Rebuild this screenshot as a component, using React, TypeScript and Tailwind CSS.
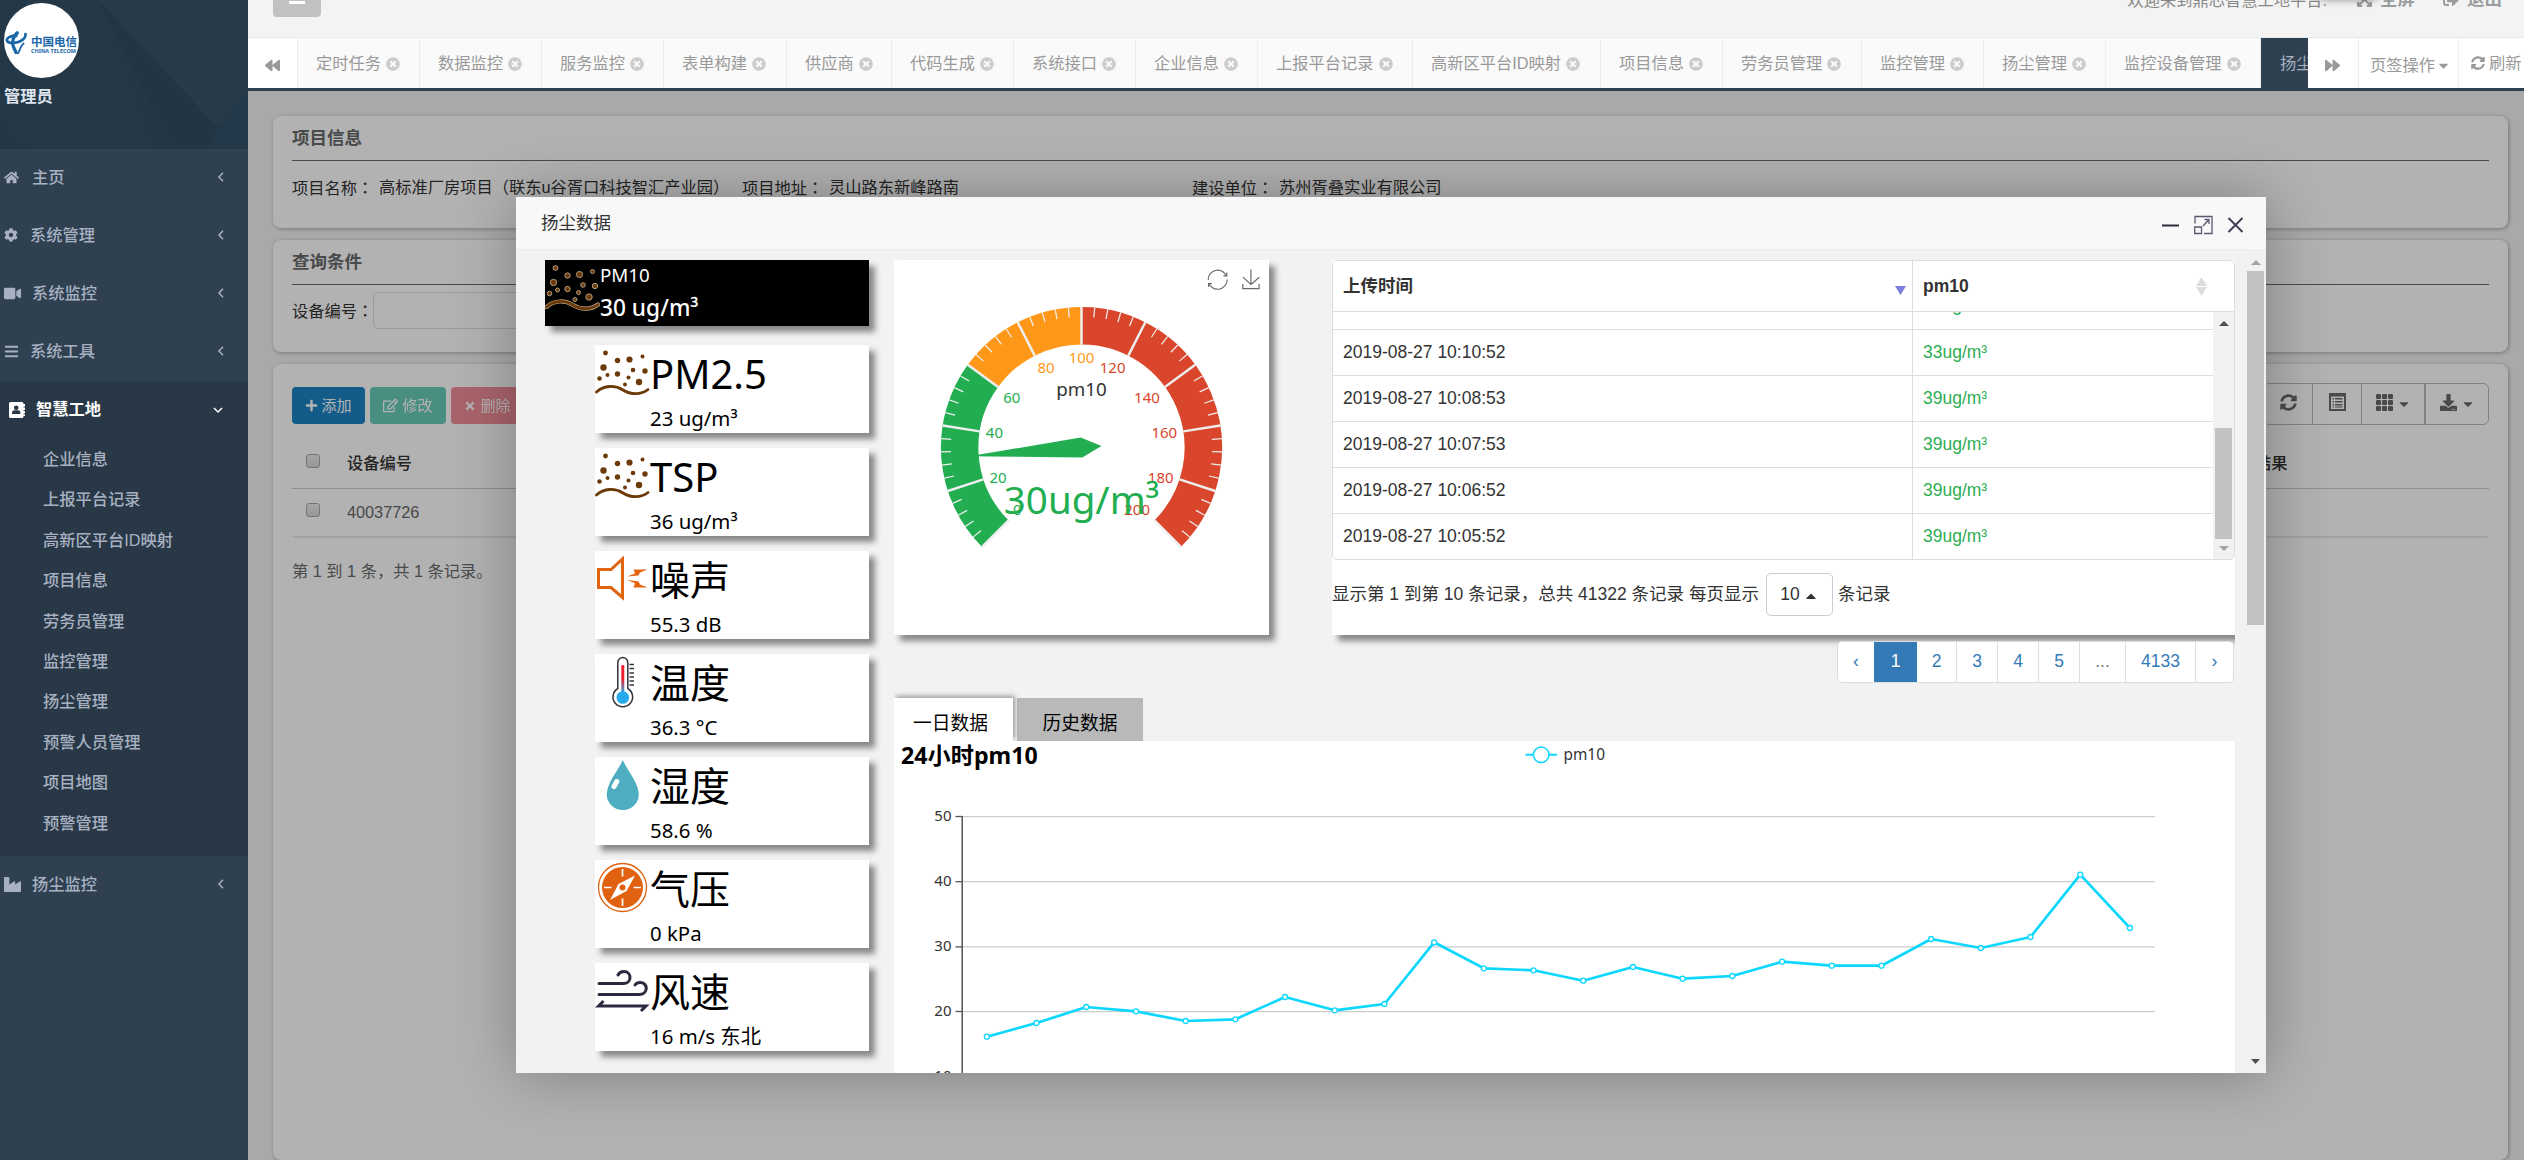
import React from 'react';
import {
  FaHome, FaCog, FaVideo, FaBars, FaIndustry, FaBackward, FaForward, FaTimesCircle, FaCaretDown, FaCaretUp,
  FaSyncAlt, FaPlus, FaTimes, FaRegEdit, FaDownload, FaExpandArrowsAlt, FaSignOutAlt,
} from 'react-icons/fa';

const UI = "font-['Noto_Sans','Noto_Sans_CJK_SC',sans-serif]";
const ARIAL = "font-['Liberation_Sans','Noto_Sans_CJK_SC',sans-serif]";

/* ---------- Sidebar ---------- */

function Chevron({ down = false }: { down?: boolean }) {
  return (
    <svg width="12" height="12" viewBox="0 0 12 12" fill="none" stroke="currentColor" strokeWidth="1.5">
      <path d={down ? 'M2 4L6 8L10 4' : 'M8 1.8L4 6L8 10.2'} />
    </svg>
  );
}

function ContactBook() {
  return (
    <svg width="16" height="16" viewBox="0 0 16 16">
      <path fill="#fff" d="M1.5 0H13a1.5 1.5 0 0 1 1.5 1.5V2H16v2.5h-1.5v1H16V8h-1.500v1H16v2.500h-1.500v1H16V14h-1.500v.5A1.500 1.500 0 0 1 13 16H1.500A1.500 1.500 0 0 1 0 14.500v-13A1.500 1.500 0 0 1 1.500 0Z" />
      <circle cx="7.2" cy="5.800" r="2.300" fill="#293846" />
      <path d="M3 12v-1.500a2.500 2.500 0 0 1 2.500-2.200h3.400a2.500 2.500 0 0 1 2.500 2.200V12Z" fill="#293846" />
    </svg>
  );
}

function TelecomLogo() {
  return (
    <div className="flex size-[75px] items-center overflow-hidden rounded-full bg-white text-[#1a66a8]">
      <svg width="23" height="25" viewBox="0 0 24 26" className="mt-[5px] ml-[1px] shrink-0" fill="none" stroke="currentColor">
        <path d="M21 2C23 7 17 12 8 12.500C2 12.500 0 9 4 6.500C8 4 13 5 13 5" strokeWidth="2.800" />
        <path d="M14 1C8 5 7 12 9 17C10 20 12 22 12 24" strokeWidth="3.400" />
        <path d="M13 24C17 19 15 16 20 12.500" strokeWidth="1.800" />
      </svg>
      <div className={`mt-[8px] ml-[3px] flex flex-col whitespace-nowrap ${UI}`}>
        <span className="text-[11.5px] leading-[13px] font-bold">中国电信</span>
        <span className="text-[5.500px] leading-[7px] font-bold">CHINA TELECOM</span>
      </div>
    </div>
  );
}

const subItems = ['企业信息', '上报平台记录', '高新区平台ID映射', '项目信息', '劳务员管理', '监控管理', '扬尘管理', '预警人员管理', '项目地图', '预警管理'];

function NavItem({ icon, label, gap }: { icon: React.ReactNode; label: string; gap: string }) {
  return (
    <div className="flex h-[58px] items-center pr-[21px] pb-[2px] pl-[4px] text-[#a7b1c2]">
      {icon}
      <span className={`flex-1 ${gap}`}>{label}</span>
      <Chevron />
    </div>
  );
}

function Sidebar() {
  return (
    <aside className={`flex w-[248px] shrink-0 flex-col bg-[#2f4050] text-[16.25px] leading-none font-medium ${ARIAL}`}>
      <div className="relative h-[149px] overflow-hidden bg-[#243747] pt-[3px] pl-[4px]">
        <svg className="absolute inset-0" width="248" height="149">
          <path d="M98 0H248V110L218 128Z" fill="#273a4a" />
          <path d="M98 0L218 128L206 149H175Z" fill="#223544" />
          <path d="M218 128L248 90V149H208Z" fill="#233848" />
          <path d="M100 0L186 22L248 8V0Z" fill="#293b4b" />
          <path d="M0 0H98L150 149H30L0 110Z" fill="#253848" />
        </svg>
        <div className="relative">
          <TelecomLogo />
          <div className="mt-[10px] font-bold text-[#dfe4ed]">管理员</div>
        </div>
      </div>
      <NavItem icon={<FaHome size={15} />} label="主页" gap="ml-[13px]" />
      <NavItem icon={<FaCog size={14} />} label="系统管理" gap="ml-[12px]" />
      <NavItem icon={<FaVideo size={17} />} label="系统监控" gap="ml-[11px]" />
      <NavItem icon={<FaBars size={15} />} label="系统工具" gap="ml-[11px]" />
      <div className="h-[475px] bg-[#293846]">
        <div className="flex h-[58px] items-center pr-[24px] pb-[1px] pl-[9px] text-white">
          <ContactBook />
          <span className="ml-[11px] flex-1 font-bold">智慧工地</span>
          <Chevron down />
        </div>
        {subItems.map((s) => (
          <div key={s} className="flex h-[40.4px] items-center pl-[43px] text-[#a7b1c2]">{s}</div>
        ))}
      </div>
      <NavItem icon={<FaIndustry size={17} />} label="扬尘监控" gap="ml-[11px]" />
    </aside>
  );
}

/* ---------- Top bars ---------- */

const tabs: [string, string][] = [
  ['定时任务', 'w-[122px]'], ['数据监控', 'w-[122px]'], ['服务监控', 'w-[122px]'], ['表单构建', 'w-[123px]'],
  ['供应商', 'w-[105px]'], ['代码生成', 'w-[122px]'], ['系统接口', 'w-[122px]'], ['企业信息', 'w-[122px]'],
  ['上报平台记录', 'w-[155px]'], ['高新区平台ID映射', 'w-[188px]'], ['项目信息', 'w-[122px]'], ['劳务员管理', 'w-[139px]'],
  ['监控管理', 'w-[122px]'], ['扬尘管理', 'w-[122px]'], ['监控设备管理', 'w-[155px]'],
];

function TopBar() {
  return (
    <div className="relative flex h-[38px] items-start justify-between overflow-hidden border-b border-[#e7eaec] bg-[#f3f3f3] pr-[22px] pl-[25px] text-[16.25px] leading-none text-[#999c9e]">
      <div className="flex h-[17px] w-[48px] justify-center rounded-b-[4px] bg-[#c2c2c2]">
        <div className="mt-[1px] h-[3px] w-[16px] bg-white" />
      </div>
      <div className="absolute -top-[14px] left-[2070px] h-[13px] w-[60px] rounded-full bg-black/50 blur-[4px]" />
      <div className="-mt-[9px] flex items-center whitespace-nowrap">
        <span className="mr-[29px] text-[#888]">欢迎来到鼎芯智慧工地平台.</span>
        <FaExpandArrowsAlt size={17} />
        <span className="mr-[28px] ml-[7px] text-[17.5px] font-bold">全屏</span>
        <FaSignOutAlt size={16} />
        <span className="ml-[8px] text-[17.5px] font-bold">退出</span>
      </div>
    </div>
  );
}

function TabBar() {
  return (
    <div className="flex h-[53px] overflow-hidden border-b-[3px] border-[#2f4050] bg-[#fafafa] text-[16.25px] leading-none text-[#999]">
      <div className="flex w-[50px] shrink-0 items-center justify-center border-r border-[#eee] bg-white pt-[4px]"><FaBackward size={15} /></div>
      {tabs.map(([t, w]) => (
        <div key={t} className={`flex shrink-0 items-center border-r border-[#eee] pt-[1px] pl-[18px] whitespace-nowrap ${w}`}>
          {t}<FaTimesCircle size={14} className="ml-[5px] text-[#ccc]" />
        </div>
      ))}
      <div className="flex w-[47px] shrink-0 items-center overflow-hidden bg-[#2f4050] pt-[1px] pl-[19px] whitespace-nowrap text-[#a7b1c2]">扬尘数据</div>
      <div className="flex w-[51px] shrink-0 items-center justify-center border-r border-[#eee] bg-white pt-[4px] pr-[2px]"><FaForward size={15} /></div>
      <div className="flex w-[100px] shrink-0 items-center border-r border-[#eee] bg-white pt-[5px] pl-[11px] whitespace-nowrap">页签操作<FaCaretDown size={15} className="ml-[1px]" /></div>
      <div className="flex flex-1 items-center bg-white pl-[12px] whitespace-nowrap"><FaSyncAlt size={14} className="mr-[4px]" />刷新</div>
    </div>
  );
}

/* ---------- Page behind the dialog ---------- */

const CARD = 'rounded-[8px] bg-white shadow-[1px_1px_4px_rgba(0,0,0,0.3)] px-[19px]';

function Checkbox() {
  return <div className="-mt-[5px] size-[14px] rounded-[3px] border border-[#a8a8a8] bg-gradient-to-b from-[#eee] to-[#d8d8d8]" />;
}

/* A form label followed by a full-width colon centred in its cell. */
function Label({ text, className }: { text: string; className: string }) {
  return <span className={`whitespace-nowrap ${className}`}>{text}<span className="font-['Noto_Sans_CJK_TC']">：</span></span>;
}

function ListIcon() {
  return (
    <svg width="17" height="18" viewBox="0 0 17 18">
      <path fill="currentColor" fillRule="evenodd" d="M0 0H17V18H0ZM2 3.500V16H15V3.500ZM3.500 5H5V6.500H3.500ZM6 5H13.500V6.500H6ZM3.500 8H5V9.500H3.500ZM6 8H13.500V9.500H6ZM3.500 11H5V12.500H3.500ZM6 11H13.500V12.500H6ZM3.500 13.600H5V14.600H3.500ZM6 13.600H13.500V14.600H6Z" />
    </svg>
  );
}

function GridIcon() {
  return (
    <svg width="17" height="17" viewBox="0 0 17 17" fill="currentColor">
      {[0, 6, 12].map((y) => [0, 6, 12].map((x) => <rect key={`${x}-${y}`} x={x} y={y} width="5" height="5" rx="1" />))}
    </svg>
  );
}

function Page() {
  return (
    <div className="flex h-full flex-col gap-[12px] bg-[#f3f3f4] pt-[25px] pr-[16px] pl-[25px] text-[16.25px] leading-none text-[#676a6c]">
      <section className={`${CARD} h-[112px] shrink-0`}>
        <h3 className="flex h-[45px] items-center border-b border-[#676a6c] pt-[1px] text-[17.5px] font-bold">项目信息</h3>
        <div className="mt-[18px] flex whitespace-nowrap text-[#333]">
          <Label text="项目名称" className="w-[87px]" /><span className="w-[363px]">高标准厂房项目（联东u谷胥口科技智汇产业园）</span>
          <Label text="项目地址" className="w-[87px]" /><span className="w-[363px]">灵山路东新峰路南</span>
          <Label text="建设单位" className="w-[87px]" /><span>苏州胥叠实业有限公司</span>
        </div>
      </section>
      <section className={`${CARD} h-[112px] shrink-0`}>
        <h3 className="flex h-[45px] items-center border-b border-[#676a6c] pt-[1px] text-[17.5px] font-bold">查询条件</h3>
        <div className="mt-[7px] flex items-center text-[#333]">
          <Label text="设备编号" className="w-[81px]" />
          <div className="h-[37px] w-[250px] rounded-[5px] border border-[#ddd]" />
        </div>
      </section>
      <section className={`${CARD} flex-1`}>
        <div className="mt-[19px] flex items-start justify-between">
          <div className="mt-[4px] flex gap-[5px] text-[15px] text-white">
            <button className="flex h-[37px] w-[73px] items-center justify-center gap-[3px] rounded-[4px] bg-[#1c84c6]"><FaPlus size={13} />添加</button>
            <button className="flex h-[37px] w-[76px] items-center justify-center gap-[4px] rounded-[4px] bg-[#1ab394] opacity-65"><FaRegEdit size={15} />修改</button>
            <button className="flex h-[37px] w-[73px] items-center justify-center gap-[4px] rounded-[4px] bg-[#ed5565] opacity-65"><FaTimes size={12} />删除</button>
          </div>
          <div className="flex h-[42px] rounded-[6px] border border-[#bbb] text-[#676a6c]">
            <div className="flex w-[49px] items-center justify-center border-r border-[#bbb] pb-[4px]"><FaSyncAlt size={17} /></div>
            <div className="flex w-[49px] items-center justify-center border-r border-[#bbb] pb-[4px]"><ListIcon /></div>
            <div className="flex w-[64px] items-center justify-center gap-[4px] border-r-2 border-[#bbb] pb-[4px]"><GridIcon /><FaCaretDown size={14} className="mt-[4px]" /></div>
            <div className="flex w-[62px] items-center justify-center gap-[4px] pb-[4px]"><FaDownload size={17} /><FaCaretDown size={14} className="mt-[4px]" /></div>
          </div>
        </div>
        <div className="mt-[14px] flex h-[50px] items-center border-b border-[#ccc] pl-[14px] font-medium text-[#333]">
          <Checkbox /><span className="ml-[27px]">设备编号</span><span className="ml-[1843px]">结果</span>
        </div>
        <div className={`flex h-[49px] items-center rounded-b-[4px] border-b-2 border-[#e2eae9] pl-[14px] ${ARIAL}`}>
          <Checkbox /><span className="ml-[27px]">40037726</span>
        </div>
        <div className="mt-[25px]">第 1 到 1 条，共 1 条记录。</div>
      </section>
    </div>
  );
}

/* ---------- Dialog: metric cards ---------- */

function DustIcon({ light = false }: { light?: boolean }) {
  const dots: [number, number, number][] = [
    [10.500, 8, 2.400], [22.500, 15.500, 2.700], [34.500, 14.500, 3.100], [47.500, 11.500, 2], [8.500, 22.500, 3.200], [38, 25, 2.300],
    [50, 26, 2.700], [22.500, 29, 2.700], [12.500, 30, 2], [4.500, 33.500, 2.300], [33.500, 32.500, 2], [44, 37, 3.200], [30, 39.500, 2],
  ];
  const halo = light ? '#b9a68f' : 'none';
  return (
    <svg width="55" height="55" viewBox="0 0 55 55" className="shrink-0">
      {dots.map(([x, y, r]) => <circle key={`${x}-${y}`} cx={x} cy={y} r={r} fill="#6b3a08" stroke={halo} strokeWidth="0.9" />)}
      {light && <path d="M1.500 47C9 40 20 40 28 45C36 50 46 50 53 44.500" fill="none" stroke="#b9a68f" strokeWidth="4.200" strokeLinecap="round" />}
      <path d="M1.500 47C9 40 20 40 28 45C36 50 46 50 53 44.500" fill="none" stroke="#6b3a08" strokeWidth="2.800" strokeLinecap="round" />
    </svg>
  );
}

function NoiseIcon() {
  return (
    <svg width="55" height="55" viewBox="0 0 55 55" className="shrink-0">
      <path d="M3.500 18.500H16L27.500 8V46.500L16 36.500H3.500Z" fill="none" stroke="#e2640f" strokeWidth="3" />
      <path d="M32 25.500L40 22.500L38.500 18.500H52.500L45 21.500L43.500 24.500Z" fill="#e2640f" />
      <path d="M32 28.800L43.500 30.500L45 33.500L52.500 36.500H38.500L40 32.200Z" fill="#e2640f" />
    </svg>
  );
}

function ThermoIcon() {
  return (
    <svg width="55" height="55" viewBox="0 0 55 55" className="shrink-0">
      <defs>
        <linearGradient id="merc" x1="0" y1="0" x2="0" y2="1">
          <stop offset="0.500" stopColor="#ee2030" /><stop offset="1" stopColor="#2aa7e5" />
        </linearGradient>
      </defs>
      <path d="M22.800 34.500V8.500a5 5 0 0 1 10 0V34.500a9.800 9.800 0 1 1-10 0Z" fill="#fff" stroke="#33333b" strokeWidth="1.500" />
      <rect x="26.300" y="11" width="3" height="28" rx="1.200" fill="url(#merc)" />
      <circle cx="27.800" cy="43.500" r="6.300" fill="#25aaeb" />
      {[10.500, 14.500, 19, 23, 27, 31].map((y) => <path key={y} d={`M34.500 ${y}H39`} stroke="#33333b" strokeWidth="1.500" />)}
    </svg>
  );
}

function DropIcon() {
  return (
    <svg width="55" height="55" viewBox="0 0 55 55" className="shrink-0">
      <path d="M27.800 3C32 13 43.800 26 43.800 37.500A16 15.500 0 0 1 11.800 37.500C11.800 26 23.500 13 27.800 3Z" fill="#4fadc1" />
      <path d="M21.800 24.500L19 29.500" stroke="#fff" strokeWidth="5" strokeLinecap="round" />
    </svg>
  );
}

function CompassIcon() {
  return (
    <svg width="55" height="55" viewBox="0 0 55 55" className="shrink-0">
      <circle cx="27.500" cy="27.500" r="24" fill="#fff" stroke="#e06210" strokeWidth="1.300" />
      <circle cx="27.500" cy="27.500" r="20.500" fill="#e06210" />
      <path d="M27.500 9V16.500M27.500 38.500V46M9 27.500H16.500M38.500 27.500H46" stroke="#fff" strokeWidth="1.700" />
      <path d="M40 15.500L31.500 31L15 40L23.500 24Z" fill="#fff" />
      <circle cx="27.500" cy="27.500" r="3" fill="#e06210" />
    </svg>
  );
}

function WindIcon() {
  return (
    <svg width="55" height="55" viewBox="0 0 55 55" className="shrink-0" fill="none" stroke="#2d2a40" strokeWidth="3" strokeLinecap="round">
      <path d="M4 20.500H29C37 20.500 37 8.500 29 8.500C25.500 8.500 24 10 23 12" />
      <path d="M4 31.500H44C53.500 31.500 53.500 19.500 45 19.500C42.500 19.500 41 20.500 40 22" />
      <path d="M8.500 38L3.500 43H51L46 48" strokeLinecap="butt" />
    </svg>
  );
}

const metrics: [React.ReactNode, string, string][] = [
  [<DustIcon />, 'PM2.5', '23 ug/m³'], [<DustIcon />, 'TSP', '36 ug/m³'], [<NoiseIcon />, '噪声', '55.3 dB'], [<ThermoIcon />, '温度', '36.3 °C'],
  [<DropIcon />, '湿度', '58.6 %'], [<CompassIcon />, '气压', '0 kPa'], [<WindIcon />, '风速', '16 m/s 东北'],
];

const SHADOW = 'shadow-[6px_6px_6px_#888]';

function Metrics() {
  return (
    <div className="flex w-[324px] shrink-0 flex-col items-end gap-[15px] text-black">
      <div className={`mb-[4px] flex h-[66px] w-[324px] bg-black text-white ${SHADOW}`}>
        <DustIcon light />
        <div className="leading-none">
          <div className="mt-[6px] text-[18.75px]">PM10</div>
          <div className="mt-[12px] text-[22.7px] font-medium">30 ug/m³</div>
        </div>
      </div>
      {metrics.map(([icon, name, value]) => (
        <div key={name} className={`flex h-[88px] w-[274px] ${SHADOW}`}>
          <div className="flex h-full w-full bg-white">
            {icon}
            <div className="leading-none whitespace-nowrap">
              <div className="mt-[9px] h-[40px] text-[40px] leading-[40px]">{name}</div>
              <div className="mt-[14px] h-[20px] text-[20.4px] leading-[20px]">{value}</div>
            </div>
          </div>
        </div>
      ))}
    </div>
  );
}

/* ---------- Dialog: gauge ---------- */

const C = 187.5;
const R = 140.6;
const GREEN = '#22ae50';
const ORANGE = '#ff9819';
const RED = '#d9462b';

function polar(value: number, r: number): [number, number] {
  const a = ((225 - value * 1.35) * Math.PI) / 180;
  return [C + r * Math.cos(a), C - r * Math.sin(a)];
}

function arc(from: number, to: number) {
  const mid = R - 18.75;
  const [x1, y1] = polar(from, mid);
  const [x2, y2] = polar(to, mid);
  return `M${x1} ${y1}A${mid} ${mid} 0 0 1 ${x2} ${y2}`;
}

function Gauge() {
  const ticks = Array.from({ length: 51 }, (_, i) => i * 4).filter((v) => v % 20 !== 0);
  const majors = Array.from({ length: 11 }, (_, i) => i * 20);
  const a = (184.5 * Math.PI) / 180;
  const px = Math.cos(a);
  const py = -Math.sin(a);
  return (
    <svg width="375" height="375" viewBox="0 0 375 375" className={UI}>
      <path d={arc(0, 60)} stroke={GREEN} strokeWidth="37.500" fill="none" />
      <path d={arc(60, 100)} stroke={ORANGE} strokeWidth="37.500" fill="none" />
      <path d={arc(100, 200)} stroke={RED} strokeWidth="37.500" fill="none" />
      {ticks.map((v) => {
        const [x1, y1] = polar(v, R);
        const [x2, y2] = polar(v, R - 10);
        return <line key={v} x1={x1} y1={y1} x2={x2} y2={y2} stroke="#eee" strokeWidth="1.250" />;
      })}
      {majors.map((v) => {
        const [x1, y1] = polar(v, R);
        const [x2, y2] = polar(v, R - 37.5);
        const [tx, ty] = polar(v, R - 43.75);
        const ux = (tx - C) / (R - 43.75);
        const uy = (ty - C) / (R - 43.75);
        return (
          <g key={v}>
            <line x1={x1} y1={y1} x2={x2} y2={y2} stroke="#eee" strokeWidth="2.500" />
            <text
              x={tx}
              y={ty + (uy < -0.4 ? 12 : uy > 0.4 ? -1 : 5.5)}
              fontSize="15"
              textAnchor={ux < -0.4 ? 'start' : ux > 0.4 ? 'end' : 'middle'}
              fill={v <= 60 ? GREEN : v <= 100 ? ORANGE : RED}
            >
              {v}
            </text>
          </g>
        );
      })}
      <polygon
        fill={GREEN}
        points={`${C - px * 20},${C - py * 20} ${C - py * 10},${C + px * 10} ${C + px * 112.5},${C + py * 112.5} ${C + py * 10},${C - px * 10}`}
      />
      <text x={C} y="136" fontSize="18.750" textAnchor="middle" fill="#333">pm10</text>
      <text x={C} y="254" fontSize="38.500" textAnchor="middle" fill={GREEN}>30ug/m³</text>
      <g fill="none" stroke="#666">
        <path
          transform="translate(313.5 9.500) scale(0.34)"
          strokeWidth="3.300"
          d="M3.8,33.4M47,18.9h9.8V8.7M56.3,20.1C52.1,9,40.5,0.6,26.8,2.1C12.6,3.7,1.6,16.2,2.1,30.6M13,41.1H3.1v10.2M3.7,39.9c4.2,11.1,15.8,19.5,29.5,18c14.2-1.6,25.2-14.1,24.7-28.5"
        />
        <path transform="translate(347.300 9.500) scale(0.33)" strokeWidth="3.500" d="M4.7,22.9L29.3,45.5L54.7,23.4M4.6,43.6L4.6,58L53.8,58L53.8,43.6M29.2,45.1L29.2,0" />
      </g>
    </svg>
  );
}

/* ---------- Dialog: records table ---------- */

const rows: [string, string][] = [
  ['2019-08-27 10:10:52', '33ug/m³'], ['2019-08-27 10:08:53', '39ug/m³'], ['2019-08-27 10:07:53', '39ug/m³'],
  ['2019-08-27 10:06:52', '39ug/m³'], ['2019-08-27 10:05:52', '39ug/m³'],
];

function Tri({ up = false, color, w = 10, h = 5 }: { up?: boolean; color: string; w?: number; h?: number }) {
  return (
    <svg width={w} height={h} viewBox="0 0 10 5" preserveAspectRatio="none">
      <path d={up ? 'M0 5L5 0L10 5Z' : 'M0 0L5 5L10 0Z'} fill={color} />
    </svg>
  );
}

function Records() {
  return (
    <div className={`text-[17.5px] leading-none text-[#333] ${ARIAL}`}>
      <div className="h-[375px] w-[903px] bg-white">
        <div className="h-[300px] overflow-hidden rounded-[5px] border border-[#ddd]">
          <div className="flex h-[51px] border-b border-[#ddd] font-bold">
            <div className="flex w-[580px] items-center justify-between border-r border-[#ddd] pt-[2px] pr-[6px] pl-[10px]">
              上传时间<span className="mt-[7px]"><Tri color="#7b80dd" w={11} h={9} /></span>
            </div>
            <div className="flex flex-1 items-center justify-between pt-[1px] pr-[27px] pl-[10px]">
              pm10
              <span className="flex flex-col gap-[1px]"><Tri up color="#ddd" w={11} h={9} /><Tri color="#ddd" w={11} h={9} /></span>
            </div>
          </div>
          <div className="flex">
            <div className="h-[248px] flex-1 overflow-hidden">
              <div className="flex h-[18px] border-b border-[#ddd]">
                <div className="w-[580px] border-r border-[#ddd]" />
                <div className="flex items-start overflow-hidden pl-[10px] text-[#2cae54]"><span className="-mt-[15px]">33ug/m³</span></div>
              </div>
              {rows.map(([t, v]) => (
                <div key={t} className="flex h-[46px] border-b border-[#ddd]">
                  <div className="flex w-[580px] items-center border-r border-[#ddd] pl-[10px]">{t}</div>
                  <div className="flex items-center pl-[10px] text-[#2cae54]">{v}</div>
                </div>
              ))}
            </div>
            <div className="flex h-[248px] w-[21px] flex-col items-center justify-between bg-[#f1f1f1] py-[9px]">
              <Tri up color="#505050" />
              <div className="mt-auto mb-[7px] h-[111px] w-[17px] bg-[#c1c1c1]" />
              <Tri color="#a3a3a3" />
            </div>
          </div>
        </div>
        <div className="mt-[13px] flex items-center">
          显示第 1 到第 10 条记录，总共 41322 条记录 每页显示
          <div className="mr-[5px] ml-[7px] flex h-[43px] w-[67px] items-center justify-center gap-[3px] rounded-[5px] border border-[#ccc] bg-white">
            10<FaCaretUp size={16} className="mt-[3px]" />
          </div>
          条记录
        </div>
      </div>
    </div>
  );
}

function Pager() {
  const cell = 'flex items-center justify-center border-r border-[#ddd]';
  return (
    <div className={`mt-[6px] mr-[1px] flex h-[42px] overflow-hidden rounded-[5px] border border-[#ddd] bg-white text-[17.5px] leading-none text-[#337ab7] ${ARIAL}`}>
      <div className="flex w-[36px] items-center justify-center">‹</div>
      <div className="flex w-[43px] items-center justify-center bg-[#337ab7] text-white">1</div>
      <div className={`${cell} w-[40px]`}>2</div>
      <div className={`${cell} w-[41px]`}>3</div>
      <div className={`${cell} w-[41px]`}>4</div>
      <div className={`${cell} w-[41px]`}>5</div>
      <div className={`${cell} w-[46px] text-[#777]`}>...</div>
      <div className={`${cell} w-[70px]`}>4133</div>
      <div className="flex w-[37px] items-center justify-center">›</div>
    </div>
  );
}

/* ---------- Dialog: line chart ---------- */

const pointY = [295.7, 282, 266, 270.3, 280, 278.3, 256, 269.3, 263, 201.3, 227.3, 229.3, 239.7, 226, 237.7, 235, 220.7, 224.7, 224.7, 198, 207, 196, 133.7, 187];
const points = pointY.map((y, i) => [68 + 49.7 * (i + 0.5), y]);
const axis: [number, number][] = [[50, 75.5], [40, 140.7], [30, 205.9], [20, 270.5], [10, 336]];

function LineChart() {
  return (
    <svg width="1341" height="332" viewBox="0 0 1341 332" className={`block ${UI}`}>
      <text x="7" y="23" fontSize="23.200" fontWeight="700">24小时pm10</text>
      <line x1="631.5" x2="663" y1="13.700" y2="13.700" stroke="#0cd7fe" strokeWidth="2" />
      <circle cx="647.2" cy="13.700" r="7.800" fill="#fff" stroke="#0cd7fe" strokeWidth="1.500" />
      <text x="669.5" y="18.500" fontSize="15.400" fill="#333">pm10</text>
      {axis.map(([v, y]) => (
        <g key={v}>
          <line x1="68" x2="1261" y1={y} y2={y} stroke="#ccc" strokeWidth="1.250" />
          <line x1="61.5" x2="68" y1={y} y2={y} stroke="#555" strokeWidth="1.300" />
          <text x="57.5" y={y + 4} fontSize="15" textAnchor="end" fill="#333">{v}</text>
        </g>
      ))}
      <line x1="68.2" x2="68.2" y1="75" y2="332" stroke="#555" strokeWidth="1.500" />
      <polyline points={points.map((p) => p.join(',')).join(' ')} fill="none" stroke="#0cd7fe" strokeWidth="2.700" strokeLinejoin="round" />
      {points.map(([x, y]) => <circle key={x} cx={x} cy={y} r="2.500" fill="#fff" stroke="#0cd7fe" strokeWidth="1.300" />)}
    </svg>
  );
}

/* ---------- Dialog ---------- */

function WindowButtons() {
  return (
    <svg width="84" height="20" viewBox="0 0 84 20" fill="none" stroke="#2d2c3b">
      <path d="M1 10.500H18" strokeWidth="2" />
      <path d="M34 8.500V1.500H51V18.500H43" strokeWidth="1.300" stroke="#5a5970" />
      <path d="M33.700 12H40.500V18.500H33.700ZM42 11L48 4.500M43.500 4.500H48V9" strokeWidth="1.300" stroke="#5a5970" />
      <path d="M67.500 3L81.500 17M81.500 3L67.500 17" strokeWidth="2" stroke="#3f3e50" />
    </svg>
  );
}

function Dialog() {
  return (
    <div className={`absolute top-[106px] left-[268px] flex h-[876px] w-[1750px] flex-col rounded-t-[2px] bg-[#f2f2f2] shadow-[1px_1px_62px_rgba(0,0,0,0.3)] ${UI}`}>
      <div className="flex h-[53px] shrink-0 items-center justify-between border-b border-[#eee] bg-[#f8f8f8] pr-[21px] pl-[25px] text-[17.5px] leading-none text-[#333]">
        扬尘数据
        <span className="mt-[3px]"><WindowButtons /></span>
      </div>
      <div className="flex min-h-0 flex-1">
        <div className="flex flex-1 overflow-hidden pt-[10px] pl-[29px]">
          <Metrics />
          <div className="ml-[25px] flex w-[1341px] flex-col">
            <div className="flex justify-between">
              <div className={`h-[375px] w-[375px] bg-white ${SHADOW}`}><Gauge /></div>
              <div className="-mb-[20px] h-[395px] w-[903px] overflow-hidden">
                <div className={SHADOW}><Records /></div>
              </div>
            </div>
            <div className="flex shrink-0 justify-end"><Pager /></div>
            <div className="mt-[15px] flex h-[43px] shrink-0 text-[18.75px] leading-none text-black">
              <div className="z-10 flex w-[119px] items-center bg-white pt-[7px] pl-[19px] shadow-[2px_-2px_5px_#999] [clip-path:inset(-8px_-8px_0_0)]">一日数据</div>
              <div className="ml-[4px] flex w-[126px] items-center justify-center bg-[#b9b9b9] pt-[7px]">历史数据</div>
            </div>
            <div className="shrink-0 bg-white"><LineChart /></div>
          </div>
        </div>
        <div className="flex w-[21px] flex-col items-center justify-between bg-[#f1f1f1] pt-[10px] pb-[9px]">
          <Tri up color="#a3a3a3" />
          <div className="mt-[6px] mb-auto h-[354px] w-[17px] bg-[#c1c1c1]" />
          <Tri color="#505050" w={9} />
        </div>
      </div>
    </div>
  );
}

export default function App() {
  return (
    <div className={`flex h-[1160px] w-[2524px] overflow-hidden ${ARIAL}`}>
      <Sidebar />
      <main className="flex min-w-0 flex-1 flex-col">
        <TopBar />
        <TabBar />
        <div className="relative min-h-0 flex-1 overflow-hidden">
          <Page />
          <div className="absolute inset-0 bg-black/30" />
          <Dialog />
        </div>
      </main>
    </div>
  );
}
